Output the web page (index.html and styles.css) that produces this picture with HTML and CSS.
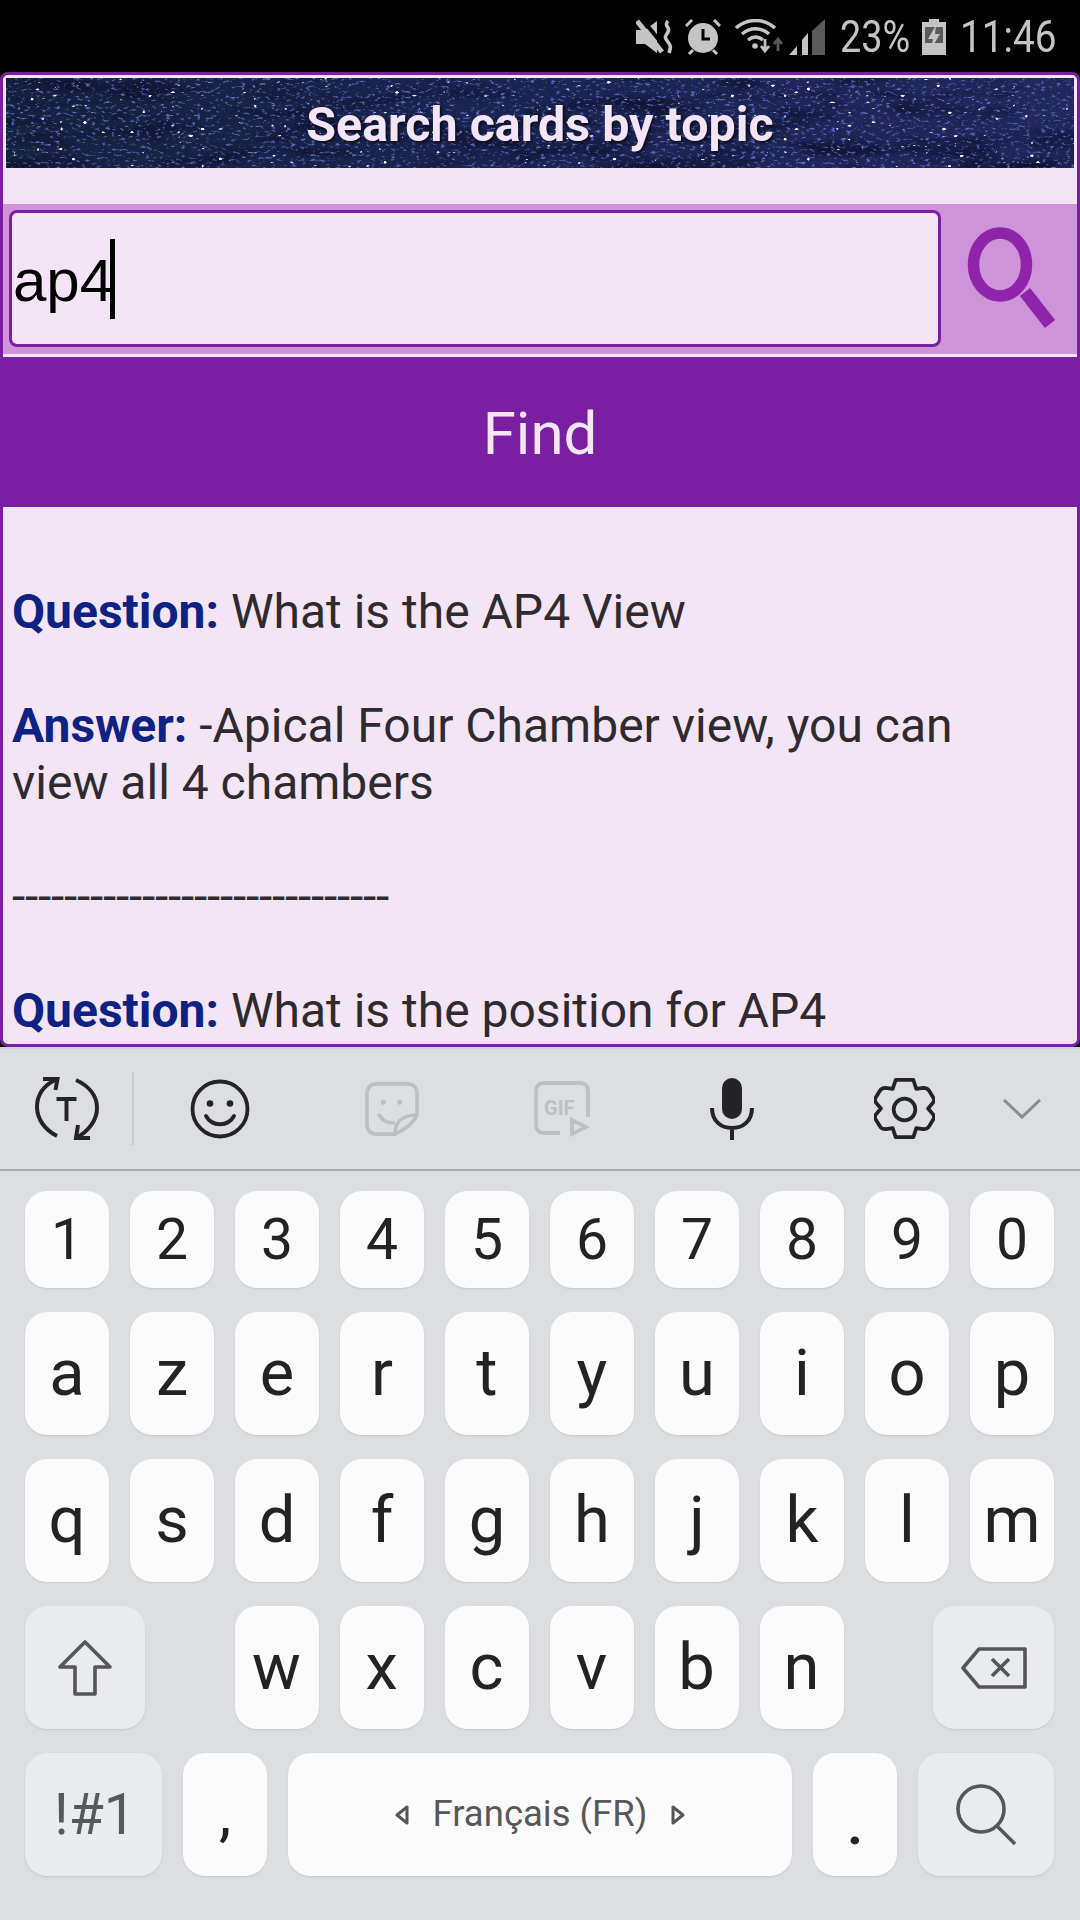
FILE: index.html
```html
<!DOCTYPE html>
<html lang="en">
<head>
<meta charset="utf-8">
<title>Search cards by topic</title>
<link rel="stylesheet" href="styles.css">
</head>
<body>
<div class="phone">
  <header class="status">
    <svg class="st-mute" viewBox="0 0 37 36"><path d="M0 11h9l12-9v32L9 25H0z" fill="#c4c4c4"/><path d="M6 0l26 32" stroke="#000" stroke-width="4"/><path d="M1 2l25 31" stroke="#c4c4c4" stroke-width="5"/><path d="M32 2c-5 5 3 6 0 11s-4 5 0 10 2 7 1 11" fill="none" stroke="#c4c4c4" stroke-width="3.600"/></svg>
    <svg class="st-alarm" viewBox="0 0 36 36"><circle cx="18" cy="19" r="15" fill="#c4c4c4"/><path d="M18 10v10h7" fill="none" stroke="#000" stroke-width="3"/><path d="M1 7l6-6M35 7l-6-6M4 35l4-4M32 35l-4-4" stroke="#c4c4c4" stroke-width="3"/></svg>
    <svg class="st-wifi" viewBox="0 0 48 36"><g fill="none" stroke="#c4c4c4" stroke-width="3.400"><path d="M1 9C12-1 29-1 40 9"/><path d="M7 15c8-7 19-7 27 0"/><path d="M13 21c5-4 10-4 15 0"/></g><circle cx="20" cy="27" r="2.800" fill="#c4c4c4"/><path d="M30 20v10M26 27l4 5 4-5" fill="none" stroke="#c4c4c4" stroke-width="2.800"/><path d="M43 32V21M39 25l4-5 4 5" fill="none" stroke="#5a5a5a" stroke-width="2.800"/></svg>
    <svg class="st-signal" viewBox="0 0 36 36"><path d="M0 36l8-9v9z" fill="#c4c4c4"/><path d="M13 36V21l6-7v22z" fill="#c4c4c4"/><path d="M23 36V12L36 0v36z" fill="#5a5a5a"/></svg>
    <span class="st-text st-pct">23%</span>
    <svg class="st-batt" viewBox="0 0 24 36"><path d="M7 0h10v3h7v33H0V3h7z" fill="#c4c4c4"/><rect x="3" y="8" width="18" height="16" fill="#5a5a5a"/><path d="M14 6L6 20h5l-2 10 9-15h-5z" fill="#c4c4c4"/></svg>
    <span class="st-text st-time">11:46</span>
  </header>

  <main class="frame">
    <div class="banner">
      <svg class="stars" viewBox="0 0 1068 90" preserveAspectRatio="none">
        <defs>
          <linearGradient id="sky" x1="0" x2="1" y1="0" y2="0">
            <stop offset="0" stop-color="#15233f"/>
            <stop offset=".45" stop-color="#1a2450"/>
            <stop offset="1" stop-color="#20285c"/>
          </linearGradient>
          <filter id="mottle" x="0" y="0" width="100%" height="100%" color-interpolation-filters="sRGB">
            <feTurbulence type="fractalNoise" baseFrequency=".012 .05" numOctaves="3" seed="8"/>
            <feColorMatrix values="0 0 0 0 .06  0 0 0 0 .08  0 0 0 0 .2  3 0 0 0 -1.35"/>
          </filter>
          <filter id="dust" x="0" y="0" width="100%" height="100%" color-interpolation-filters="sRGB">
            <feTurbulence type="fractalNoise" baseFrequency=".2 .38" numOctaves="2" seed="21"/>
            <feColorMatrix values="0 0 0 0 .38  0 0 0 0 .42  0 0 0 0 .78  0 4.500 0 0 -2.600"/>
          </filter>
          <filter id="spark" x="0" y="0" width="100%" height="100%" color-interpolation-filters="sRGB">
            <feTurbulence type="fractalNoise" baseFrequency=".17 .3" numOctaves="1" seed="5"/>
            <feColorMatrix values="0 0 0 0 .95  0 0 0 0 .95  0 0 0 0 1  0 0 18 0 -12.900"/>
          </filter>
        </defs>
        <rect width="1068" height="90" fill="url(#sky)"/>
        <rect width="1068" height="90" filter="url(#mottle)"/>
        <rect width="1068" height="90" filter="url(#dust)"/>
        <rect width="1068" height="90" filter="url(#spark)"/>
      </svg>
      <h1 class="title">Search cards by topic</h1>
    </div>

    <div class="search-row">
      <div class="input"><span class="input-text">ap4</span><span class="caret"></span></div>
      <svg class="search-btn" viewBox="0 0 96 106"><ellipse cx="38" cy="39.500" rx="26.500" ry="31.500" fill="none" stroke="#8e24aa" stroke-width="11.500"/><path d="M63 67l25 32" stroke="#8e24aa" stroke-width="13"/></svg>
    </div>

    <div class="find">Find</div>

    <section class="results">
      <p class="line"><b class="q">Question:</b> What is the AP4 View</p>
      <p class="line"><b class="q">Answer:</b> -Apical Four Chamber view, you can view all 4 chambers</p>
      <p class="line dashes">-----------------------------</p>
      <p class="line"><b class="q">Question:</b> What is the position for AP4</p>
    </section>
  </main>

  <section class="keyboard">
    <div class="toolbar">
      <svg class="tb tb-t" viewBox="0 0 64 64"><g fill="none" stroke="#242426" stroke-width="4"><path d="M22 2C9 8 2 18 2 30c0 12 8 23 20 29"/><path d="M8 2h14.500l-2 11"/><path d="M41 3c13 6 21 16 21 28 0 12-8 23-21 30"/><path d="M55 61H41l2-13"/></g><path d="M21.500 20h20v4h-8v20h-4V24h-8z" fill="#242426"/></svg>
      <span class="tb-sep"></span>
      <svg class="tb tb-emoji" viewBox="0 0 60 60"><circle cx="30" cy="30" r="27.500" fill="none" stroke="#242426" stroke-width="3.800"/><circle cx="20" cy="24.500" r="3.300" fill="#242426"/><circle cx="40" cy="24.500" r="3.300" fill="#242426"/><path d="M16 37c6 11 22 11 28 0" fill="none" stroke="#242426" stroke-width="3.800" stroke-linecap="round"/></svg>
      <svg class="tb tb-sticker" viewBox="0 0 56 56"><g fill="none" stroke="#bdbfc2" stroke-width="3.800"><path d="M31 54H12C6 54 2 50 2 44V12C2 6 6 2 12 2h32c6 0 10 4 10 10v22C50 44 40 50 31 54z"/><path d="M31 54c0-12 6-19 23-20"/><path d="M14 33c4 8 10 10 17 9"/></g><circle cx="19" cy="21" r="2.600" fill="#bdbfc2"/><circle cx="36" cy="21" r="2.600" fill="#bdbfc2"/></svg>
      <div class="tb-gif"><svg class="gif-frame" viewBox="0 0 56 56"><g fill="none" stroke="#bdbfc2" stroke-width="3.800"><path d="M26 52H10c-5 0-8-3-8-8V10c0-5 3-8 8-8h36c5 0 8 3 8 8v26"/><path d="M38 39v14l14-7z"/></g></svg><span class="gif-text">GIF</span></div>
      <svg class="tb tb-mic" viewBox="0 0 44 62"><rect x="12" y="0" width="20" height="41" rx="10" fill="#242426"/><path d="M2 30c0 13 9 20 20 20s20-7 20-20M22 50v12" fill="none" stroke="#242426" stroke-width="4"/></svg>
      <svg class="tb tb-gear" viewBox="0 0 62 64"><path d="M22 2h18l3 9 7-1c3 0 5 1 6 3l5 8c0 2 0 3-1 4l-5 6 5 6c1 1 1 2 1 4l-5 8c-1 2-3 3-6 3l-7-1-3 9H22l-3-9-7 1c-3 0-5-1-6-3l-5-8c0-2 0-3 1-4l5-6-5-6c-1-1-1-2-1-4l5-8c1-2 3-3 6-3l7 1z" fill="none" stroke="#242426" stroke-width="3.800" stroke-linejoin="round"/><circle cx="31" cy="32" r="11" fill="none" stroke="#242426" stroke-width="3.800"/></svg>
      <svg class="tb tb-chev" viewBox="0 0 38 20"><path d="M1 1l18 17L37 1" fill="none" stroke="#8a8b8d" stroke-width="3"/></svg>
    </div>

    <div class="keys">
      <div class="row row-digits">
        <div class="key num">1</div><div class="key num">2</div><div class="key num">3</div><div class="key num">4</div><div class="key num">5</div><div class="key num">6</div><div class="key num">7</div><div class="key num">8</div><div class="key num">9</div><div class="key num">0</div>
      </div>
      <div class="row">
        <div class="key">a</div><div class="key">z</div><div class="key">e</div><div class="key">r</div><div class="key">t</div><div class="key">y</div><div class="key">u</div><div class="key">i</div><div class="key">o</div><div class="key">p</div>
      </div>
      <div class="row">
        <div class="key">q</div><div class="key">s</div><div class="key">d</div><div class="key">f</div><div class="key">g</div><div class="key">h</div><div class="key">j</div><div class="key">k</div><div class="key">l</div><div class="key">m</div>
      </div>
      <div class="row row-between">
        <div class="key fn fn-shift"><svg class="shift-ic" viewBox="0 0 54 56"><path d="M27 2L2 27h15v27h20V27h15z" fill="none" stroke="#555659" stroke-width="3.600" stroke-linejoin="round"/></svg></div>
        <div class="key-group">
          <div class="key">w</div><div class="key">x</div><div class="key">c</div><div class="key">v</div><div class="key">b</div><div class="key">n</div>
        </div>
        <div class="key fn fn-back"><svg class="back-ic" viewBox="0 0 66 42"><path d="M18 2h46v38H18L2 21z" fill="none" stroke="#555659" stroke-width="3.600" stroke-linejoin="round"/><path d="M31 12l17 17M48 12L31 29" stroke="#555659" stroke-width="3.600"/></svg></div>
      </div>
      <div class="row">
        <div class="key fn fn-sym sym">!#1</div>
        <div class="key punct comma">,</div>
        <div class="key space"><svg class="tri" viewBox="0 0 14 20"><path d="M12 2v16L2 10z" fill="none" stroke="#555659" stroke-width="3" stroke-linejoin="round"/></svg><span class="lang">Français (FR)</span><svg class="tri" viewBox="0 0 14 20"><path d="M2 2v16l10-8z" fill="none" stroke="#555659" stroke-width="3" stroke-linejoin="round"/></svg></div>
        <div class="key punct period">.</div>
        <div class="key fn fn-wide"><svg class="go-ic" viewBox="0 0 60 62"><circle cx="25" cy="25" r="23" fill="none" stroke="#555659" stroke-width="3.600"/><path d="M41 42l18 18" stroke="#555659" stroke-width="3.600"/></svg></div>
      </div>
    </div>
  </section>
</div>
</body>
</html>
```

FILE: styles.css
```css
* { box-sizing: border-box; }
html, body { margin: 0; padding: 0; }
body { width: 1080px; height: 1920px; overflow: hidden; background: #000; font-family: Roboto, sans-serif; }
.phone { width: 1080px; height: 1920px; display: flex; flex-direction: column; }

/* status bar */
.status { height: 72px; flex: none; background: #000; display: flex; align-items: center; justify-content: flex-end; padding: 1px 24px 0 0; color: #c4c4c4; }
.status svg { display: block; flex: none; }
.st-mute { width: 37px; height: 36px; margin-right: 12px; }
.st-alarm { width: 36px; height: 36px; margin-right: 14px; }
.st-wifi { width: 48px; height: 36px; margin-right: 6px; }
.st-signal { width: 36px; height: 36px; margin-right: 15px; }
.st-text { font-size: 44px; line-height: 44px; display: inline-block; transform-origin: left center; }
.st-pct { width: 82px; transform: scaleX(.86); }
.st-batt { width: 24px; height: 36px; margin-right: 14px; }
.st-time { width: 96px; transform: scaleX(.88); white-space: nowrap; }

/* app frame */
.frame { height: 975px; flex: none; background: #f3e5f5; border: 3px solid #7b1fa2; border-radius: 8px; overflow: hidden; padding-top: 3px; }
.banner { position: relative; height: 90px; margin: 0 3px; padding-top: 4px; display: flex; align-items: center; justify-content: center; overflow: hidden; }
.stars { position: absolute; inset: 0; width: 100%; height: 100%; }
.title { position: relative; margin: 0; font-size: 48.400px; font-weight: 700; color: #f3e5f5; text-shadow: 2px 2px 3px #0c0c1e; line-height: 1; }
.search-row { margin-top: 36px; height: 150px; background: #ce93d8; padding: 6px 0 7px 6px; display: flex; align-items: stretch; }
.input { width: 932px; background: #f3e5f5; border: 3px solid #7b1fa2; border-radius: 8px; display: flex; align-items: center; padding-left: 1px; }
.input-text { font-family: "Liberation Sans", sans-serif; font-size: 60px; line-height: 80px; color: #000; padding-top: 4px; }
.caret { width: 5px; height: 80px; background: #000; margin-left: -3px; }
.search-btn { width: 96px; height: 106px; margin: 15px 0 0 21px; flex: none; }
.find { margin: 3px -3px 0; height: 150px; padding-top: 2px; background: #7b1fa2; color: #f3e5f5; font-size: 60px; display: flex; align-items: center; justify-content: center; }
.results { padding: 76px 40px 0 9px; color: #2f2a2e; font-size: 48px; line-height: 57px; }
.line { margin: 0 0 57px; }
.dashes { letter-spacing: -.27px; }
.q { color: #0d2283; font-weight: 700; }

/* keyboard */
.keyboard { flex: 1; background: #dcdee1; display: flex; flex-direction: column; }
.toolbar { height: 124px; flex: none; display: grid; grid-template-columns: 133px 174px 170px 170px 170px 174px 62px; align-items: center; justify-items: center; border-top: 2px solid #d0d1d4; border-bottom: 2px solid #a9abad; position: relative; }
.tb { display: block; }
.tb-t { width: 64px; height: 64px; }
.tb-sep { position: absolute; left: 132px; top: 23px; width: 2px; height: 73px; background: #c6c8cb; }
.tb-emoji { width: 60px; height: 60px; }
.tb-sticker { width: 54px; height: 54px; }
.tb-gif { position: relative; width: 56px; height: 56px; }
.gif-frame { display: block; width: 56px; height: 56px; }
.gif-text { position: absolute; left: 10px; top: 16px; font-size: 20px; font-weight: 700; color: #bdbfc2; line-height: 22px; }
.tb-mic { width: 44px; height: 62px; }
.tb-gear { width: 61px; height: 63px; }
.tb-chev { width: 38px; height: 20px; }

.keys { padding: 20px 26px 0 25px; display: flex; flex-direction: column; gap: 24px; }
.row { display: flex; gap: 21px; height: 123px; }
.row-digits { height: 97px; }
.row-between { justify-content: space-between; }
.key-group { display: flex; gap: 21px; }
.key { width: 84px; height: 100%; flex: none; background: #fbfbfb; border-radius: 22px; box-shadow: 0 1px 2px rgba(0,0,0,.1); display: flex; align-items: center; justify-content: center; font-size: 65px; color: #222325; line-height: 1; }
.num { font-size: 57px; }
.fn { background: #e9ebee; }
.fn-shift { width: 120px; }
.fn-back { width: 121px; }
.fn-wide { width: 136px; }
.fn-sym { width: 137px; padding-left: 3px; }
.sym { font-size: 57px; color: #57585b; }
.punct { font-size: 62px; }
.comma { padding-bottom: 2px; }
.period { padding-top: 16px; font-weight: 500; }
.space { width: 504px; gap: 24px; }
.lang { font-size: 36.500px; color: #57585b; }
.tri { width: 14px; height: 20px; display: block; }
.shift-ic { width: 54px; height: 56px; display: block; }
.back-ic { width: 66px; height: 42px; display: block; }
.go-ic { width: 60px; height: 62px; display: block; }
```
